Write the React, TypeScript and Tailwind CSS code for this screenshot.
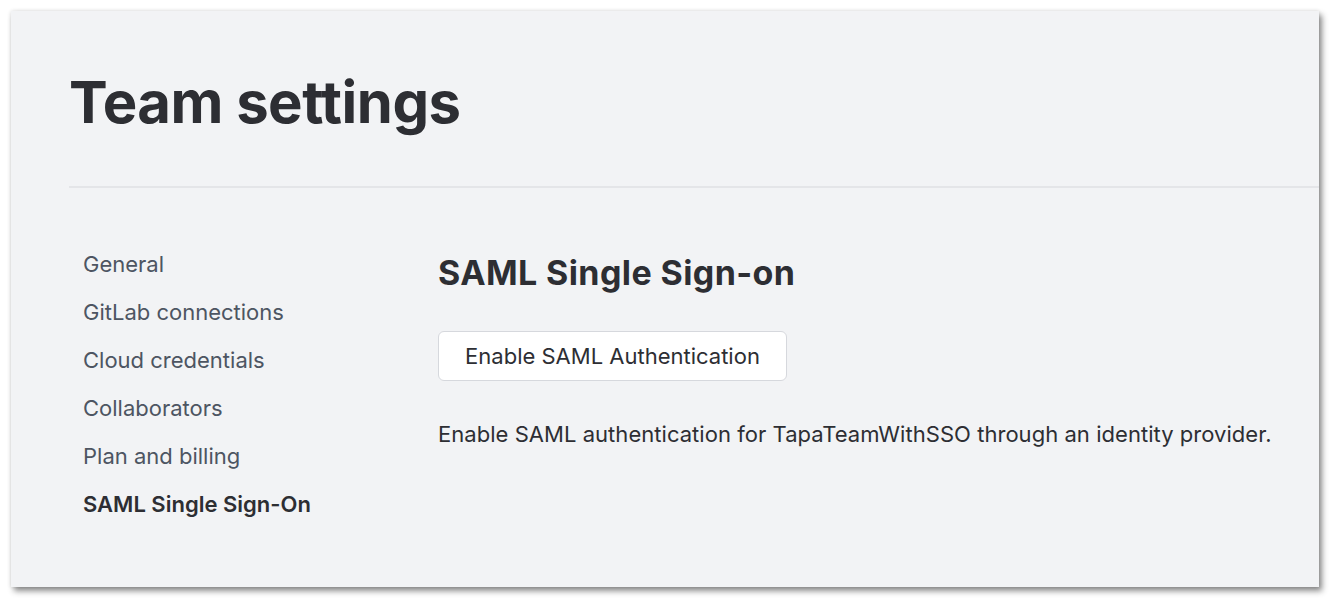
const navItems = [
  'General',
  'GitLab connections',
  'Cloud credentials',
  'Collaborators',
  'Plan and billing',
  'SAML Single Sign-On',
];

const App = () => {
  return (
    <div className="min-h-screen bg-white p-[11px] font-['Inter',sans-serif]">
      <div className="h-[576px] w-[1308px] bg-[#f2f3f5] shadow-[0_0_4px_rgba(0,0,0,0.12),3px_4px_6px_rgba(0,0,0,0.45)]">
        <div className="pl-[58px] pt-[55px]">
          <h1 className="text-[58px] font-bold leading-[72px] tracking-[-0.5px] text-[#2d2e33]">Team settings</h1>
          <div className="mt-[48px] h-[2px] bg-[#e4e5e8]" />
        </div>

        <div className="flex pl-[72px] pt-[62px]">
          <nav className="flex w-[355px] flex-col">
            {navItems.map((item, idx) => (
              <a
                key={idx}
                className={
                  idx === navItems.length - 1
                    ? 'h-[48px] text-[22px] leading-[28px] font-semibold text-[#2d2e33]'
                    : 'h-[48px] text-[22px] leading-[28px] text-[#4d5562]'
                }
              >
                {item}
              </a>
            ))}
          </nav>

          <div className="flex flex-col">
            <h2 className="mt-[3px] text-[34px] font-bold leading-[40px] tracking-[0.4px] text-[#2d2e33]">SAML Single Sign-on</h2>
            <button className="mt-[38px] h-[50px] w-[349px] rounded-[6px] border border-[#d6d8dd] bg-white text-[22px] text-[#2d2e33]">
              Enable SAML Authentication
            </button>
            <p className="mt-[39px] text-[22px] leading-[28px] tracking-[0.04px] text-[#2d2e33]">
              Enable SAML authentication for TapaTeamWithSSO through an identity provider.
            </p>
          </div>
        </div>
      </div>
    </div>
  );
};

export default App;
